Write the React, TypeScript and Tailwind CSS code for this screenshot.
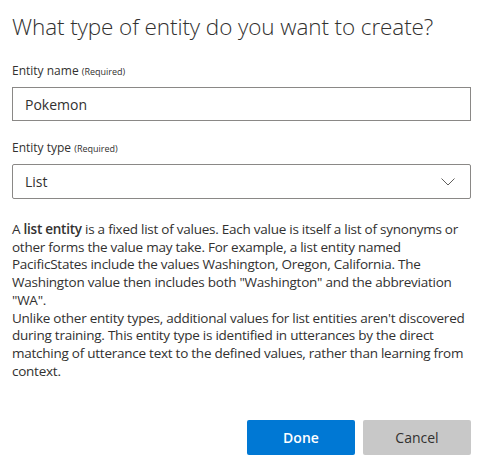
function FieldLabel({ text }: { text: string }) {
  return (
    <div className="text-[12px] leading-[16px] text-[#323130]">
      {text} <span className="text-[9px]">(Required)</span>
    </div>
  );
}

export default function App() {
  return (
    <div className="flex h-[468px] w-[484px] flex-col bg-white pl-3 pr-[13px] font-['Open_Sans',sans-serif] text-[#323130]">
      <h1 className="mt-[12px] text-[22.5px] font-light leading-[30px] tracking-[-0.1px]">
        What type of entity do you want to create?
      </h1>

      <div className="mt-[21px]">
        <FieldLabel text="Entity name" />
        <div className="mt-[7px] flex h-[34px] items-center border border-[#8a8886] px-3 text-[14px]">
          Pokemon
        </div>
      </div>

      <div className="mt-[19px]">
        <FieldLabel text="Entity type" />
        <div className="mt-[7px] flex h-[35px] items-center justify-between rounded-[2px] border border-[#8a8886] pl-3 pr-[15px] text-[14px]">
          <span>List</span>
          {/* chevron */}
          <svg width="14" height="8" viewBox="0 0 14 8" fill="none">
            <path d="M0.5 0.5 L7 7 L13.5 0.5" stroke="#605e5c" strokeWidth="1" />
          </svg>
        </div>
      </div>

      <div className="mt-[22px] text-[13.5px] leading-[17.7px] tracking-[-0.25px] text-[#323130]">
        <p>
          A <b className="font-semibold">list entity</b> is a fixed list of values. Each value is itself a list of synonyms or other forms the value may take. For example, a list entity named PacificStates include the values Washington, Oregon, California. The Washington value then includes both "Washington" and the abbreviation "WA".
        </p>
        <p>
          Unlike other entity types, additional values for list entities aren't discovered during training. This entity type is identified in utterances by the direct matching of utterance text to the defined values, rather than learning from context.
        </p>
      </div>

      <div className="mt-auto mb-[13px] flex justify-end gap-2">
        <button className="h-[35px] w-[108px] rounded-[2px] bg-[#0078d4] text-[14px] font-semibold text-white">
          Done
        </button>
        <button className="h-[35px] w-[108px] rounded-[2px] bg-[#c8c8c8] text-[14px] text-[#323130]">
          Cancel
        </button>
      </div>
    </div>
  );
}
